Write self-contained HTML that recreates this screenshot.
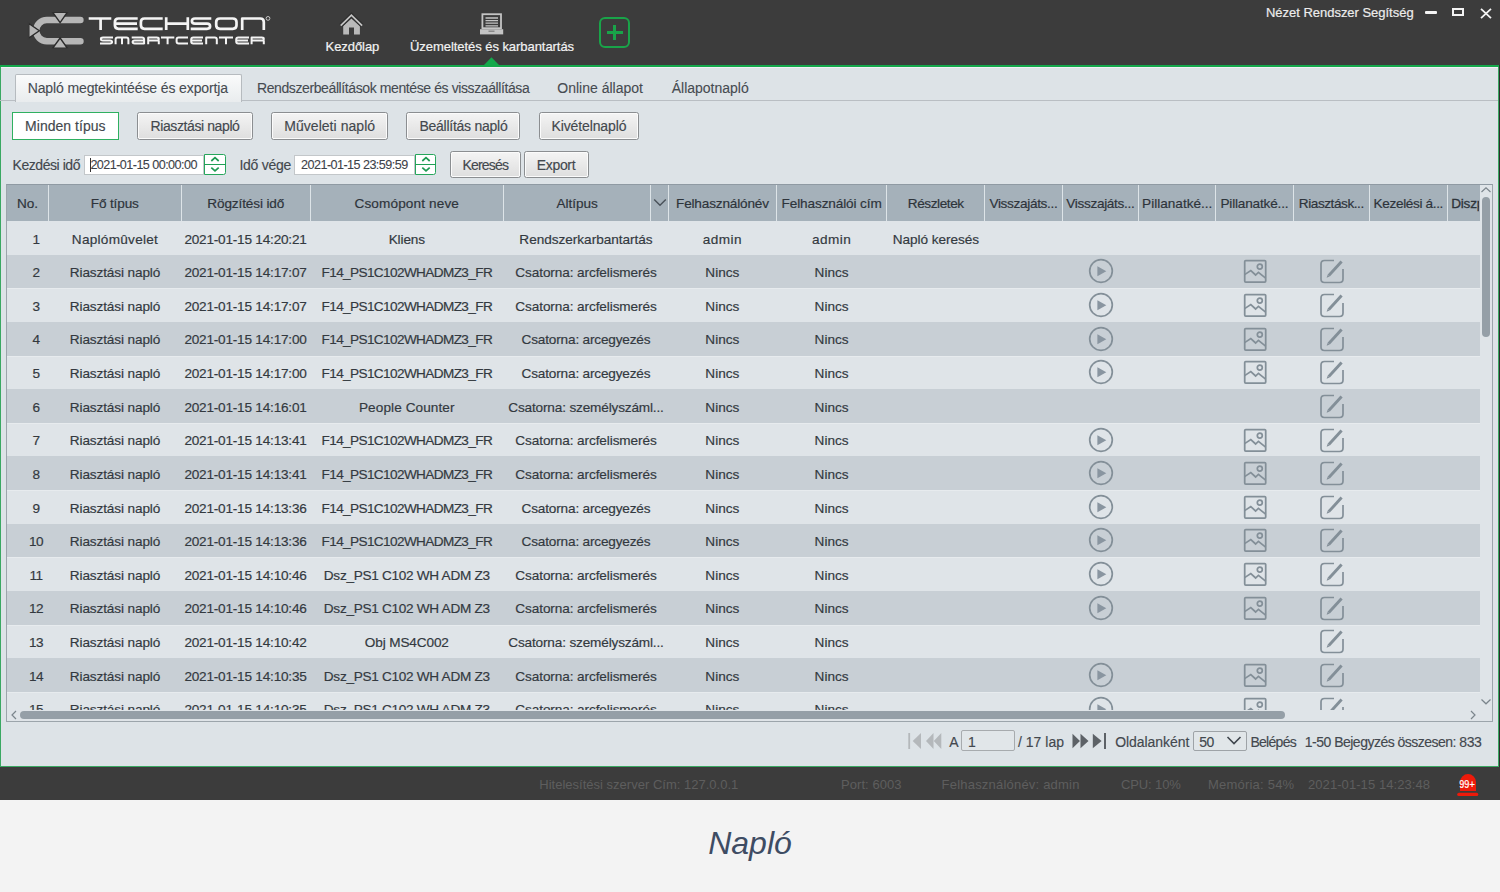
<!DOCTYPE html>
<html><head><meta charset="utf-8">
<style>
*{box-sizing:border-box;margin:0;padding:0}
html,body{width:1500px;height:892px;overflow:hidden;background:#f3f3f3;font-family:"Liberation Sans",sans-serif}
.a{position:absolute}
.t{white-space:pre}
svg{display:block}
</style></head><body>
<div class="a" style="left:0;top:0;width:1500px;height:65px;background:#3c3c3c"></div>
<div class="a" style="left:0;top:65px;width:1500px;height:2px;background:#14a84b"></div>
<div class="a" style="left:0;top:67px;width:1499px;height:700px;background:#dde3e7"></div>
<div class="a" style="left:1px;top:67px;width:1497px;height:1px;background:#f3eff6"></div>
<div class="a" style="left:0;top:67px;width:1px;height:700px;background:#3aa862"></div>
<div class="a" style="left:1498px;top:67px;width:1px;height:700px;background:#3aa862"></div>
<div class="a" style="left:0;top:766px;width:1499px;height:1px;background:#3aa862"></div>
<div class="a" style="left:1499px;top:65px;width:1px;height:702px;background:#2e2e2e"></div>
<div class="a" style="left:0;top:767px;width:1500px;height:33px;background:#3c3c3c"></div>
<div class="a" style="left:0;top:800px;width:1500px;height:92px;background:#f3f3f3"></div>
<div class="a" style="left:1425px;top:11px;width:12px;height:3px;background:#f4f4f4;border-radius:1px"></div>
<div class="a" style="left:1452px;top:8px;width:12px;height:8px;border:2px solid #f4f4f4"></div>
<svg class="a" style="left:1480px;top:8px" width="12" height="11" viewBox="0 0 12 11"><path d="M1 0.8 L11 10.2 M11 0.8 L1 10.2" stroke="#f4f4f4" stroke-width="1.8"/></svg>
<svg class="a" style="left:338px;top:12px" width="28" height="24" viewBox="0 0 28 24"><path d="M5.2 14 L13.4 6.4 L21.9 14 V22.5 H16 V15.6 H11 V22.5 H5.2 Z" fill="#b9b9b9"/><path d="M2.7 13.6 L13.4 3.2 L24.1 13.6" fill="none" stroke="#2e2e2e" stroke-width="4.2"/><path d="M2.7 13.6 L13.4 3.2 L24.1 13.6" fill="none" stroke="#c4c4c4" stroke-width="1.8"/></svg>
<svg class="a" style="left:479px;top:12px" width="26" height="24" viewBox="0 0 26 24"><rect x="3.4" y="2.2" width="18.6" height="14" fill="none" stroke="#c4c4c4" stroke-width="1.8"/><path d="M6.5 6 H19 M6.5 8.6 H19 M6.5 11.2 H19 M6.5 13.8 H19" stroke="#c4c4c4" stroke-width="1.3"/><rect x="1" y="17.2" width="23.2" height="5.2" fill="#c4c4c4"/><rect x="9.5" y="18.6" width="6" height="1.2" fill="#7a7a7a"/></svg>
<svg class="a" style="left:483px;top:57px" width="17" height="9" viewBox="0 0 17 9"><path d="M0.5 8.5 L8.5 0.3 L16.5 8.5 Z" fill="#14a84b"/></svg>
<div class="a" style="left:598.6px;top:17.1px;width:31.3px;height:30.7px;border:2.5px solid #19a449;border-radius:6px"></div>
<div class="a" style="left:606.9px;top:31.3px;width:15.9px;height:2.4px;background:#19a449"></div>
<div class="a" style="left:613.2px;top:25.1px;width:2.7px;height:14.9px;background:#19a449"></div>
<svg class="a" style="left:0;top:0" width="280" height="60" viewBox="0 0 280 60">
<path d="M46.8 16.8 H80.4 A3.25 3.25 0 0 1 80.4 23.3 H46.8 A7.3 7.3 0 0 0 46.8 37.9 H80.4 A3.3 3.3 0 0 1 80.4 44.5 H46.8 A13.85 13.85 0 0 1 46.8 16.8 Z" fill="#b6b6b6"/>
<g fill="#b6b6b6" stroke="#2b2b2b" stroke-width="1.4" stroke-linejoin="miter">
<path d="M52.6 12.2 L67.4 12.2 L60.1 22.6 Z"/>
<path d="M52.6 48.3 L67.4 48.3 L60.1 38.0 Z"/>
<path d="M28.8 23.5 L28.8 38 L39.3 30.8 Z"/>
</g>
<path d="M50 11.4 H70 M50 49.1 H70 M28 21 V40.5" stroke="#3c3c3c" stroke-width="1.6"/>
<g fill="none" stroke="#f4f4f4" stroke-width="2.7" stroke-linejoin="round" stroke-linecap="butt">
<path d="M88.7 18.5 H111.3 M100.6 18.5 V30"/>
<path d="M137.7 18.5 H118.5 Q114.9 18.5 114.9 22 V25.3 Q114.9 28.8 118.5 28.8 H137.7 M115 23.7 H137"/>
<path d="M162.7 18.5 H144.5 Q140.9 18.5 140.9 22 V25.3 Q140.9 28.8 144.5 28.8 H162.7"/>
<path d="M166.2 17.3 V30 M187.8 17.3 V30 M166.2 23.7 H187.8"/>
<path d="M211.3 18.5 H195 Q191.9 18.5 191.9 21.1 Q191.9 23.7 195 23.7 H207 Q210.1 23.7 210.1 26.3 Q210.1 28.8 207 28.8 H190.7"/>
<path d="M220 18.5 H232.7 Q236.5 18.5 236.5 22 V25.3 Q236.5 28.8 232.7 28.8 H220 Q216.2 28.8 216.2 25.3 V22 Q216.2 18.5 220 18.5 Z"/>
<path d="M242.2 30 V18.5 H260.3 Q263.8 18.5 263.8 22 V30"/>
</g>
<circle cx="268" cy="18.4" r="1.9" fill="none" stroke="#d0d0d0" stroke-width="0.9"/>
<g fill="none" stroke="#f4f4f4" stroke-width="2" stroke-linejoin="round" stroke-linecap="butt">
<path d="M113 37.6 H103 Q100.9 37.6 100.9 39 Q100.9 40.5 103 40.5 H110 Q112.1 40.5 112.1 42 Q112.1 43.4 110 43.4 H100"/>
<path d="M115.6 44.3 V39.6 Q115.6 37.6 117.6 37.6 H126.4 Q128.4 37.6 128.4 39.6 V44.3 M122 37.6 V44.3"/>
<path d="M131.7 37.6 H142 Q144.1 37.6 144.1 39.6 V44.3 M144.1 43.4 H134.6 Q132.6 43.4 132.6 42 Q132.6 40.5 134.6 40.5 H144.1"/>
<path d="M148.2 44.3 V37.6 H156.8 Q158.8 37.6 158.8 39 Q158.8 40.5 156.8 40.5 H148.5 M158.8 40.5 V44.3"/>
<path d="M161 37.6 H174.3 M167.6 37.6 V44.3"/>
<path d="M188 37.6 H178.6 Q176.6 37.6 176.6 39.6 V41.4 Q176.6 43.4 178.6 43.4 H188"/>
<path d="M203 37.6 H193.2 Q191.2 37.6 191.2 39.6 V41.4 Q191.2 43.4 193.2 43.4 H203 M191.5 40.5 H202"/>
<path d="M206.2 44.3 V37.6 H214.8 Q216.8 37.6 216.8 39.6 V44.3"/>
<path d="M219 37.6 H233 M226 37.6 V44.3"/>
<path d="M249 37.6 H238.2 Q236.2 37.6 236.2 39.6 V41.4 Q236.2 43.4 238.2 43.4 H249 M236.5 40.5 H248"/>
<path d="M251.6 44.3 V37.6 H261.8 Q263.8 37.6 263.8 39 Q263.8 40.5 261.8 40.5 H252 M263.8 40.5 V44.3"/>
</g></svg>
<div class="a" style="left:0;top:100px;width:1498px;height:1px;background:#b9bec3"></div>
<div class="a" style="left:14.5px;top:73.5px;width:227px;height:28px;border:1px solid #b6bbbf;border-bottom:none;border-radius:2px 2px 0 0;background:linear-gradient(#fafbfb,#e9ecee)"></div>
<div class="a" style="left:12px;top:112px;width:106.7px;height:27.5px;border:1.5px solid #2fb060;background:#fff"></div>
<div class="a" style="left:137.1px;top:112px;width:115.80000000000001px;height:27.69999999999999px;border:1.3px solid #8b8e91;border-radius:2.5px;background:linear-gradient(#f4f4f4,#dedede);box-shadow:inset 0 0 0 1px #fbfbfb"></div>
<div class="a" style="left:271.2px;top:112px;width:117.0px;height:27.69999999999999px;border:1.3px solid #8b8e91;border-radius:2.5px;background:linear-gradient(#f4f4f4,#dedede);box-shadow:inset 0 0 0 1px #fbfbfb"></div>
<div class="a" style="left:406.4px;top:112px;width:114.10000000000002px;height:27.69999999999999px;border:1.3px solid #8b8e91;border-radius:2.5px;background:linear-gradient(#f4f4f4,#dedede);box-shadow:inset 0 0 0 1px #fbfbfb"></div>
<div class="a" style="left:538.7px;top:112px;width:100.39999999999998px;height:27.69999999999999px;border:1.3px solid #8b8e91;border-radius:2.5px;background:linear-gradient(#f4f4f4,#dedede);box-shadow:inset 0 0 0 1px #fbfbfb"></div>
<div class="a" style="left:83.5px;top:154.5px;width:120.69999999999999px;height:20px;border:1px solid #c3c7ca;background:#fff"></div>
<div class="a" style="left:204.2px;top:153.8px;width:21.400000000000006px;height:21px;border:1.4px solid #26a65c;border-radius:0 2.5px 2.5px 0;background:#fff"></div>
<div class="a" style="left:204.2px;top:163.6px;width:21.400000000000006px;height:1.5px;background:#1f9f55"></div>
<svg class="a" style="left:209.89999999999998px;top:156px" width="10" height="17" viewBox="0 0 10 17"><path d="M1.3 5 L5 1.7 L8.7 5 M1.3 11.6 L5 14.9 L8.7 11.6" fill="none" stroke="#1e9a52" stroke-width="1.7"/></svg>
<div class="a" style="left:89.9px;top:157.5px;width:1px;height:14.5px;background:#333"></div>
<div class="a" style="left:294.2px;top:154.5px;width:120.80000000000001px;height:20px;border:1px solid #c3c7ca;background:#fff"></div>
<div class="a" style="left:415px;top:153.8px;width:21.399999999999977px;height:21px;border:1.4px solid #26a65c;border-radius:0 2.5px 2.5px 0;background:#fff"></div>
<div class="a" style="left:415px;top:163.6px;width:21.399999999999977px;height:1.5px;background:#1f9f55"></div>
<svg class="a" style="left:420.7px;top:156px" width="10" height="17" viewBox="0 0 10 17"><path d="M1.3 5 L5 1.7 L8.7 5 M1.3 11.6 L5 14.9 L8.7 11.6" fill="none" stroke="#1e9a52" stroke-width="1.7"/></svg>
<div class="a" style="left:449.9px;top:150.7px;width:70.89999999999998px;height:27.200000000000017px;border:1.3px solid #8b8e91;border-radius:2.5px;background:linear-gradient(#f4f4f4,#dedede);box-shadow:inset 0 0 0 1px #fbfbfb"></div>
<div class="a" style="left:523.5px;top:150.7px;width:65.0px;height:27.200000000000017px;border:1.3px solid #8b8e91;border-radius:2.5px;background:linear-gradient(#f4f4f4,#dedede);box-shadow:inset 0 0 0 1px #fbfbfb"></div>
<div class="a" style="left:6px;top:183.5px;width:1487px;height:538.5px;border:1px solid #9ca5ab;border-top:1.5px solid #8f9aa3;background:#dfe4e8"></div>
<div class="a" style="left:7px;top:185px;width:1472.5px;height:36px;background:#a5b1ba"></div>
<div class="a" style="left:47.5px;top:185px;width:1px;height:36px;background:#dde4e8"></div>
<div class="a" style="left:181.0px;top:185px;width:1px;height:36px;background:#dde4e8"></div>
<div class="a" style="left:309.5px;top:185px;width:1px;height:36px;background:#dde4e8"></div>
<div class="a" style="left:503.0px;top:185px;width:1px;height:36px;background:#dde4e8"></div>
<div class="a" style="left:650.2px;top:185px;width:1px;height:36px;background:#dde4e8"></div>
<div class="a" style="left:667.8px;top:185px;width:1px;height:36px;background:#dde4e8"></div>
<div class="a" style="left:776.0px;top:185px;width:1px;height:36px;background:#dde4e8"></div>
<div class="a" style="left:886.2px;top:185px;width:1px;height:36px;background:#dde4e8"></div>
<div class="a" style="left:984.3px;top:185px;width:1px;height:36px;background:#dde4e8"></div>
<div class="a" style="left:1061.5px;top:185px;width:1px;height:36px;background:#dde4e8"></div>
<div class="a" style="left:1138.2px;top:185px;width:1px;height:36px;background:#dde4e8"></div>
<div class="a" style="left:1215.3px;top:185px;width:1px;height:36px;background:#dde4e8"></div>
<div class="a" style="left:1292.5px;top:185px;width:1px;height:36px;background:#dde4e8"></div>
<div class="a" style="left:1369.1px;top:185px;width:1px;height:36px;background:#dde4e8"></div>
<div class="a" style="left:1446.5px;top:185px;width:1px;height:36px;background:#dde4e8"></div>
<div class="a" style="left:1447.7px;top:185px;width:31.8px;height:36px;overflow:hidden"><div style="position:absolute;left:3.5px;top:10.2px;font-size:13.6px;line-height:17px;color:#2e343b;white-space:nowrap;letter-spacing:-0.2px;-webkit-text-stroke:0.3px currentColor">Diszpécser</div></div>
<svg class="a" style="left:653px;top:197px" width="14" height="11" viewBox="0 0 14 11"><path d="M1.2 2.5 L7 8.3 L12.8 2.5" fill="none" stroke="#4a525a" stroke-width="1.4"/></svg>
<div class="a" style="left:7px;top:709.5px;width:1485px;height:11.5px;background:#dfe4e8"></div>
<div class="a" style="left:20px;top:711px;width:1265px;height:7.6px;border-radius:4px;background:#959fa7"></div>
<svg class="a" style="left:10px;top:710px" width="8" height="10" viewBox="0 0 8 10"><path d="M6 1 L2 5 L6 9" fill="none" stroke="#7b858c" stroke-width="1.2"/></svg>
<svg class="a" style="left:1469px;top:710px" width="8" height="10" viewBox="0 0 8 10"><path d="M2 1 L6 5 L2 9" fill="none" stroke="#7b858c" stroke-width="1.2"/></svg>
<div class="a" style="left:1479.5px;top:185px;width:12.5px;height:524.5px;background:#dfe4e8"></div>
<div class="a" style="left:1481.5px;top:197px;width:8.2px;height:139.5px;border-radius:4px;background:#959fa7"></div>
<svg class="a" style="left:1480px;top:186px" width="12" height="8" viewBox="0 0 12 8"><path d="M1.5 6 L6 1.8 L10.5 6" fill="none" stroke="#7b858c" stroke-width="1.2"/></svg>
<svg class="a" style="left:1480px;top:698px" width="12" height="8" viewBox="0 0 12 8"><path d="M1.5 1.5 L6 5.8 L10.5 1.5" fill="none" stroke="#7b858c" stroke-width="1.2"/></svg>
<svg class="a" style="left:906px;top:732px" width="38" height="18" viewBox="0 0 38 18"><rect x="2.3" y="1" width="1.8" height="16" fill="#b4b8bb"/><path d="M15 1 V17 L6.7 9 Z" fill="#b4b8bb"/><path d="M27.5 1 V17 L20 9 Z M35.3 1 V17 L27.8 9 Z" fill="#b4b8bb"/></svg>
<div class="a" style="left:960.7px;top:730.3px;width:54.6px;height:20.7px;border:1px solid #a7abae;border-radius:2px;background:#e1e6e9"></div>
<svg class="a" style="left:1071px;top:732px" width="38" height="18" viewBox="0 0 38 18"><path d="M1.5 1.8 V16.2 L9 9 Z M9.5 1.8 V16.2 L17.5 9 Z" fill="#5d6267"/><path d="M21.8 1.8 V16.2 L30.6 9 Z" fill="#5d6267"/><rect x="33" y="1" width="2" height="16" fill="#5d6267"/></svg>
<div class="a" style="left:1192.5px;top:730.6px;width:54.7px;height:20.8px;border:1px solid #9ea3a7;border-radius:2px;background:#e1e6e9"></div>
<svg class="a" style="left:1226px;top:735px" width="16" height="11" viewBox="0 0 16 11"><path d="M1.5 2 L8 8.5 L14.5 2" fill="none" stroke="#3f464d" stroke-width="1.6"/></svg>
<svg class="a" style="left:1450px;top:768px" width="36" height="32" viewBox="0 0 36 32"><path d="M10 23 V14 A8 7.9 0 0 1 26 14 V23 Z" fill="#ee1a0a"/><rect x="7.2" y="24.7" width="21.1" height="3.4" rx="1.7" fill="#ee1a0a"/></svg>
<div class="a" style="left:1456.8px;top:777px;width:20px;height:14px;font-size:10.6px;line-height:14px;text-align:center;color:#fff;white-space:nowrap;transform:scaleX(0.86);-webkit-text-stroke:0.2px #fff;font-family:Liberation Sans">99+</div>
<div class="a" style="left:0;top:0;width:1479.5px;height:709.5px;overflow:hidden">
<div class="a" style="left:7px;top:254.63px;width:1472.5px;height:33.63px;background:#c8cfd5"></div>
<div class="a" style="left:7px;top:288.26px;width:1472.5px;height:1.2px;background:#e7ebee"></div>
<div class="a" style="left:7px;top:321.89px;width:1472.5px;height:33.63px;background:#c8cfd5"></div>
<div class="a" style="left:7px;top:355.52px;width:1472.5px;height:1.2px;background:#e7ebee"></div>
<div class="a" style="left:7px;top:389.15px;width:1472.5px;height:33.63px;background:#c8cfd5"></div>
<div class="a" style="left:7px;top:422.78px;width:1472.5px;height:1.2px;background:#e7ebee"></div>
<div class="a" style="left:7px;top:456.41px;width:1472.5px;height:33.63px;background:#c8cfd5"></div>
<div class="a" style="left:7px;top:490.04px;width:1472.5px;height:1.2px;background:#e7ebee"></div>
<div class="a" style="left:7px;top:523.67px;width:1472.5px;height:33.63px;background:#c8cfd5"></div>
<div class="a" style="left:7px;top:557.30px;width:1472.5px;height:1.2px;background:#e7ebee"></div>
<div class="a" style="left:7px;top:590.93px;width:1472.5px;height:33.63px;background:#c8cfd5"></div>
<div class="a" style="left:7px;top:624.56px;width:1472.5px;height:1.2px;background:#e7ebee"></div>
<div class="a" style="left:7px;top:658.19px;width:1472.5px;height:33.63px;background:#c8cfd5"></div>
<div class="a" style="left:7px;top:691.82px;width:1472.5px;height:1.2px;background:#e7ebee"></div>
<svg class="a" style="left:1087.5px;top:258.44px" width="26" height="26" viewBox="0 0 26 26"><circle cx="13" cy="13" r="11.3" fill="none" stroke="#838f98" stroke-width="1.7"/><path d="M9.4 8.3 L18.3 13.3 L9.4 18.3 Z" fill="#8995a0"/></svg>
<svg class="a" style="left:1241.8px;top:258.44px" width="26" height="26" viewBox="0 0 26 26"><rect x="2.7" y="2.5" width="21" height="21.5" rx="1" fill="none" stroke="#838f98" stroke-width="1.75"/><circle cx="17.8" cy="8.6" r="2.5" fill="none" stroke="#838f98" stroke-width="1.7"/><path d="M2.6 16.6 L8.8 12.6 L13.6 17 L16.4 14.4 L23.6 20.2" fill="none" stroke="#838f98" stroke-width="1.7"/></svg>
<svg class="a" style="left:1318.8px;top:258.44px" width="26" height="26" viewBox="0 0 26 26"><path d="M15 2.5 H5.5 Q2 2.5 2 6 V21 Q2 24.5 5.5 24.5 H20.5 Q24 24.5 24 21 V11" fill="none" stroke="#838f98" stroke-width="1.7"/><path d="M22.6 3.6 L9.8 17.6" stroke="#838f98" stroke-width="2.9"/><path d="M7.6 19.8 L8.8 16.6 L10.6 18.4 Z" fill="#838f98"/></svg>
<svg class="a" style="left:1087.5px;top:292.07px" width="26" height="26" viewBox="0 0 26 26"><circle cx="13" cy="13" r="11.3" fill="none" stroke="#838f98" stroke-width="1.7"/><path d="M9.4 8.3 L18.3 13.3 L9.4 18.3 Z" fill="#8995a0"/></svg>
<svg class="a" style="left:1241.8px;top:292.07px" width="26" height="26" viewBox="0 0 26 26"><rect x="2.7" y="2.5" width="21" height="21.5" rx="1" fill="none" stroke="#838f98" stroke-width="1.75"/><circle cx="17.8" cy="8.6" r="2.5" fill="none" stroke="#838f98" stroke-width="1.7"/><path d="M2.6 16.6 L8.8 12.6 L13.6 17 L16.4 14.4 L23.6 20.2" fill="none" stroke="#838f98" stroke-width="1.7"/></svg>
<svg class="a" style="left:1318.8px;top:292.07px" width="26" height="26" viewBox="0 0 26 26"><path d="M15 2.5 H5.5 Q2 2.5 2 6 V21 Q2 24.5 5.5 24.5 H20.5 Q24 24.5 24 21 V11" fill="none" stroke="#838f98" stroke-width="1.7"/><path d="M22.6 3.6 L9.8 17.6" stroke="#838f98" stroke-width="2.9"/><path d="M7.6 19.8 L8.8 16.6 L10.6 18.4 Z" fill="#838f98"/></svg>
<svg class="a" style="left:1087.5px;top:325.70px" width="26" height="26" viewBox="0 0 26 26"><circle cx="13" cy="13" r="11.3" fill="none" stroke="#838f98" stroke-width="1.7"/><path d="M9.4 8.3 L18.3 13.3 L9.4 18.3 Z" fill="#8995a0"/></svg>
<svg class="a" style="left:1241.8px;top:325.70px" width="26" height="26" viewBox="0 0 26 26"><rect x="2.7" y="2.5" width="21" height="21.5" rx="1" fill="none" stroke="#838f98" stroke-width="1.75"/><circle cx="17.8" cy="8.6" r="2.5" fill="none" stroke="#838f98" stroke-width="1.7"/><path d="M2.6 16.6 L8.8 12.6 L13.6 17 L16.4 14.4 L23.6 20.2" fill="none" stroke="#838f98" stroke-width="1.7"/></svg>
<svg class="a" style="left:1318.8px;top:325.70px" width="26" height="26" viewBox="0 0 26 26"><path d="M15 2.5 H5.5 Q2 2.5 2 6 V21 Q2 24.5 5.5 24.5 H20.5 Q24 24.5 24 21 V11" fill="none" stroke="#838f98" stroke-width="1.7"/><path d="M22.6 3.6 L9.8 17.6" stroke="#838f98" stroke-width="2.9"/><path d="M7.6 19.8 L8.8 16.6 L10.6 18.4 Z" fill="#838f98"/></svg>
<svg class="a" style="left:1087.5px;top:359.33px" width="26" height="26" viewBox="0 0 26 26"><circle cx="13" cy="13" r="11.3" fill="none" stroke="#838f98" stroke-width="1.7"/><path d="M9.4 8.3 L18.3 13.3 L9.4 18.3 Z" fill="#8995a0"/></svg>
<svg class="a" style="left:1241.8px;top:359.33px" width="26" height="26" viewBox="0 0 26 26"><rect x="2.7" y="2.5" width="21" height="21.5" rx="1" fill="none" stroke="#838f98" stroke-width="1.75"/><circle cx="17.8" cy="8.6" r="2.5" fill="none" stroke="#838f98" stroke-width="1.7"/><path d="M2.6 16.6 L8.8 12.6 L13.6 17 L16.4 14.4 L23.6 20.2" fill="none" stroke="#838f98" stroke-width="1.7"/></svg>
<svg class="a" style="left:1318.8px;top:359.33px" width="26" height="26" viewBox="0 0 26 26"><path d="M15 2.5 H5.5 Q2 2.5 2 6 V21 Q2 24.5 5.5 24.5 H20.5 Q24 24.5 24 21 V11" fill="none" stroke="#838f98" stroke-width="1.7"/><path d="M22.6 3.6 L9.8 17.6" stroke="#838f98" stroke-width="2.9"/><path d="M7.6 19.8 L8.8 16.6 L10.6 18.4 Z" fill="#838f98"/></svg>
<svg class="a" style="left:1318.8px;top:392.96px" width="26" height="26" viewBox="0 0 26 26"><path d="M15 2.5 H5.5 Q2 2.5 2 6 V21 Q2 24.5 5.5 24.5 H20.5 Q24 24.5 24 21 V11" fill="none" stroke="#838f98" stroke-width="1.7"/><path d="M22.6 3.6 L9.8 17.6" stroke="#838f98" stroke-width="2.9"/><path d="M7.6 19.8 L8.8 16.6 L10.6 18.4 Z" fill="#838f98"/></svg>
<svg class="a" style="left:1087.5px;top:426.60px" width="26" height="26" viewBox="0 0 26 26"><circle cx="13" cy="13" r="11.3" fill="none" stroke="#838f98" stroke-width="1.7"/><path d="M9.4 8.3 L18.3 13.3 L9.4 18.3 Z" fill="#8995a0"/></svg>
<svg class="a" style="left:1241.8px;top:426.60px" width="26" height="26" viewBox="0 0 26 26"><rect x="2.7" y="2.5" width="21" height="21.5" rx="1" fill="none" stroke="#838f98" stroke-width="1.75"/><circle cx="17.8" cy="8.6" r="2.5" fill="none" stroke="#838f98" stroke-width="1.7"/><path d="M2.6 16.6 L8.8 12.6 L13.6 17 L16.4 14.4 L23.6 20.2" fill="none" stroke="#838f98" stroke-width="1.7"/></svg>
<svg class="a" style="left:1318.8px;top:426.60px" width="26" height="26" viewBox="0 0 26 26"><path d="M15 2.5 H5.5 Q2 2.5 2 6 V21 Q2 24.5 5.5 24.5 H20.5 Q24 24.5 24 21 V11" fill="none" stroke="#838f98" stroke-width="1.7"/><path d="M22.6 3.6 L9.8 17.6" stroke="#838f98" stroke-width="2.9"/><path d="M7.6 19.8 L8.8 16.6 L10.6 18.4 Z" fill="#838f98"/></svg>
<svg class="a" style="left:1087.5px;top:460.23px" width="26" height="26" viewBox="0 0 26 26"><circle cx="13" cy="13" r="11.3" fill="none" stroke="#838f98" stroke-width="1.7"/><path d="M9.4 8.3 L18.3 13.3 L9.4 18.3 Z" fill="#8995a0"/></svg>
<svg class="a" style="left:1241.8px;top:460.23px" width="26" height="26" viewBox="0 0 26 26"><rect x="2.7" y="2.5" width="21" height="21.5" rx="1" fill="none" stroke="#838f98" stroke-width="1.75"/><circle cx="17.8" cy="8.6" r="2.5" fill="none" stroke="#838f98" stroke-width="1.7"/><path d="M2.6 16.6 L8.8 12.6 L13.6 17 L16.4 14.4 L23.6 20.2" fill="none" stroke="#838f98" stroke-width="1.7"/></svg>
<svg class="a" style="left:1318.8px;top:460.23px" width="26" height="26" viewBox="0 0 26 26"><path d="M15 2.5 H5.5 Q2 2.5 2 6 V21 Q2 24.5 5.5 24.5 H20.5 Q24 24.5 24 21 V11" fill="none" stroke="#838f98" stroke-width="1.7"/><path d="M22.6 3.6 L9.8 17.6" stroke="#838f98" stroke-width="2.9"/><path d="M7.6 19.8 L8.8 16.6 L10.6 18.4 Z" fill="#838f98"/></svg>
<svg class="a" style="left:1087.5px;top:493.86px" width="26" height="26" viewBox="0 0 26 26"><circle cx="13" cy="13" r="11.3" fill="none" stroke="#838f98" stroke-width="1.7"/><path d="M9.4 8.3 L18.3 13.3 L9.4 18.3 Z" fill="#8995a0"/></svg>
<svg class="a" style="left:1241.8px;top:493.86px" width="26" height="26" viewBox="0 0 26 26"><rect x="2.7" y="2.5" width="21" height="21.5" rx="1" fill="none" stroke="#838f98" stroke-width="1.75"/><circle cx="17.8" cy="8.6" r="2.5" fill="none" stroke="#838f98" stroke-width="1.7"/><path d="M2.6 16.6 L8.8 12.6 L13.6 17 L16.4 14.4 L23.6 20.2" fill="none" stroke="#838f98" stroke-width="1.7"/></svg>
<svg class="a" style="left:1318.8px;top:493.86px" width="26" height="26" viewBox="0 0 26 26"><path d="M15 2.5 H5.5 Q2 2.5 2 6 V21 Q2 24.5 5.5 24.5 H20.5 Q24 24.5 24 21 V11" fill="none" stroke="#838f98" stroke-width="1.7"/><path d="M22.6 3.6 L9.8 17.6" stroke="#838f98" stroke-width="2.9"/><path d="M7.6 19.8 L8.8 16.6 L10.6 18.4 Z" fill="#838f98"/></svg>
<svg class="a" style="left:1087.5px;top:527.49px" width="26" height="26" viewBox="0 0 26 26"><circle cx="13" cy="13" r="11.3" fill="none" stroke="#838f98" stroke-width="1.7"/><path d="M9.4 8.3 L18.3 13.3 L9.4 18.3 Z" fill="#8995a0"/></svg>
<svg class="a" style="left:1241.8px;top:527.49px" width="26" height="26" viewBox="0 0 26 26"><rect x="2.7" y="2.5" width="21" height="21.5" rx="1" fill="none" stroke="#838f98" stroke-width="1.75"/><circle cx="17.8" cy="8.6" r="2.5" fill="none" stroke="#838f98" stroke-width="1.7"/><path d="M2.6 16.6 L8.8 12.6 L13.6 17 L16.4 14.4 L23.6 20.2" fill="none" stroke="#838f98" stroke-width="1.7"/></svg>
<svg class="a" style="left:1318.8px;top:527.49px" width="26" height="26" viewBox="0 0 26 26"><path d="M15 2.5 H5.5 Q2 2.5 2 6 V21 Q2 24.5 5.5 24.5 H20.5 Q24 24.5 24 21 V11" fill="none" stroke="#838f98" stroke-width="1.7"/><path d="M22.6 3.6 L9.8 17.6" stroke="#838f98" stroke-width="2.9"/><path d="M7.6 19.8 L8.8 16.6 L10.6 18.4 Z" fill="#838f98"/></svg>
<svg class="a" style="left:1087.5px;top:561.12px" width="26" height="26" viewBox="0 0 26 26"><circle cx="13" cy="13" r="11.3" fill="none" stroke="#838f98" stroke-width="1.7"/><path d="M9.4 8.3 L18.3 13.3 L9.4 18.3 Z" fill="#8995a0"/></svg>
<svg class="a" style="left:1241.8px;top:561.12px" width="26" height="26" viewBox="0 0 26 26"><rect x="2.7" y="2.5" width="21" height="21.5" rx="1" fill="none" stroke="#838f98" stroke-width="1.75"/><circle cx="17.8" cy="8.6" r="2.5" fill="none" stroke="#838f98" stroke-width="1.7"/><path d="M2.6 16.6 L8.8 12.6 L13.6 17 L16.4 14.4 L23.6 20.2" fill="none" stroke="#838f98" stroke-width="1.7"/></svg>
<svg class="a" style="left:1318.8px;top:561.12px" width="26" height="26" viewBox="0 0 26 26"><path d="M15 2.5 H5.5 Q2 2.5 2 6 V21 Q2 24.5 5.5 24.5 H20.5 Q24 24.5 24 21 V11" fill="none" stroke="#838f98" stroke-width="1.7"/><path d="M22.6 3.6 L9.8 17.6" stroke="#838f98" stroke-width="2.9"/><path d="M7.6 19.8 L8.8 16.6 L10.6 18.4 Z" fill="#838f98"/></svg>
<svg class="a" style="left:1087.5px;top:594.75px" width="26" height="26" viewBox="0 0 26 26"><circle cx="13" cy="13" r="11.3" fill="none" stroke="#838f98" stroke-width="1.7"/><path d="M9.4 8.3 L18.3 13.3 L9.4 18.3 Z" fill="#8995a0"/></svg>
<svg class="a" style="left:1241.8px;top:594.75px" width="26" height="26" viewBox="0 0 26 26"><rect x="2.7" y="2.5" width="21" height="21.5" rx="1" fill="none" stroke="#838f98" stroke-width="1.75"/><circle cx="17.8" cy="8.6" r="2.5" fill="none" stroke="#838f98" stroke-width="1.7"/><path d="M2.6 16.6 L8.8 12.6 L13.6 17 L16.4 14.4 L23.6 20.2" fill="none" stroke="#838f98" stroke-width="1.7"/></svg>
<svg class="a" style="left:1318.8px;top:594.75px" width="26" height="26" viewBox="0 0 26 26"><path d="M15 2.5 H5.5 Q2 2.5 2 6 V21 Q2 24.5 5.5 24.5 H20.5 Q24 24.5 24 21 V11" fill="none" stroke="#838f98" stroke-width="1.7"/><path d="M22.6 3.6 L9.8 17.6" stroke="#838f98" stroke-width="2.9"/><path d="M7.6 19.8 L8.8 16.6 L10.6 18.4 Z" fill="#838f98"/></svg>
<svg class="a" style="left:1318.8px;top:628.38px" width="26" height="26" viewBox="0 0 26 26"><path d="M15 2.5 H5.5 Q2 2.5 2 6 V21 Q2 24.5 5.5 24.5 H20.5 Q24 24.5 24 21 V11" fill="none" stroke="#838f98" stroke-width="1.7"/><path d="M22.6 3.6 L9.8 17.6" stroke="#838f98" stroke-width="2.9"/><path d="M7.6 19.8 L8.8 16.6 L10.6 18.4 Z" fill="#838f98"/></svg>
<svg class="a" style="left:1087.5px;top:662.01px" width="26" height="26" viewBox="0 0 26 26"><circle cx="13" cy="13" r="11.3" fill="none" stroke="#838f98" stroke-width="1.7"/><path d="M9.4 8.3 L18.3 13.3 L9.4 18.3 Z" fill="#8995a0"/></svg>
<svg class="a" style="left:1241.8px;top:662.01px" width="26" height="26" viewBox="0 0 26 26"><rect x="2.7" y="2.5" width="21" height="21.5" rx="1" fill="none" stroke="#838f98" stroke-width="1.75"/><circle cx="17.8" cy="8.6" r="2.5" fill="none" stroke="#838f98" stroke-width="1.7"/><path d="M2.6 16.6 L8.8 12.6 L13.6 17 L16.4 14.4 L23.6 20.2" fill="none" stroke="#838f98" stroke-width="1.7"/></svg>
<svg class="a" style="left:1318.8px;top:662.01px" width="26" height="26" viewBox="0 0 26 26"><path d="M15 2.5 H5.5 Q2 2.5 2 6 V21 Q2 24.5 5.5 24.5 H20.5 Q24 24.5 24 21 V11" fill="none" stroke="#838f98" stroke-width="1.7"/><path d="M22.6 3.6 L9.8 17.6" stroke="#838f98" stroke-width="2.9"/><path d="M7.6 19.8 L8.8 16.6 L10.6 18.4 Z" fill="#838f98"/></svg>
<svg class="a" style="left:1087.5px;top:695.64px" width="26" height="26" viewBox="0 0 26 26"><circle cx="13" cy="13" r="11.3" fill="none" stroke="#838f98" stroke-width="1.7"/><path d="M9.4 8.3 L18.3 13.3 L9.4 18.3 Z" fill="#8995a0"/></svg>
<svg class="a" style="left:1241.8px;top:695.64px" width="26" height="26" viewBox="0 0 26 26"><rect x="2.7" y="2.5" width="21" height="21.5" rx="1" fill="none" stroke="#838f98" stroke-width="1.75"/><circle cx="17.8" cy="8.6" r="2.5" fill="none" stroke="#838f98" stroke-width="1.7"/><path d="M2.6 16.6 L8.8 12.6 L13.6 17 L16.4 14.4 L23.6 20.2" fill="none" stroke="#838f98" stroke-width="1.7"/></svg>
<svg class="a" style="left:1318.8px;top:695.64px" width="26" height="26" viewBox="0 0 26 26"><path d="M15 2.5 H5.5 Q2 2.5 2 6 V21 Q2 24.5 5.5 24.5 H20.5 Q24 24.5 24 21 V11" fill="none" stroke="#838f98" stroke-width="1.7"/><path d="M22.6 3.6 L9.8 17.6" stroke="#838f98" stroke-width="2.9"/><path d="M7.6 19.8 L8.8 16.6 L10.6 18.4 Z" fill="#838f98"/></svg>
<div class="a t" style="left:32.46px;top:230.54px;font-size:13.6px;line-height:17px;color:#33393f;letter-spacing:-0.492px;-webkit-text-stroke:0.18px currentColor">1</div>
<div class="a t" style="left:71.85px;top:230.54px;font-size:13.6px;line-height:17px;color:#33393f;letter-spacing:0.265px;-webkit-text-stroke:0.18px currentColor">Naplómûvelet</div>
<div class="a t" style="left:184.40px;top:230.54px;font-size:13.6px;line-height:17px;color:#33393f;letter-spacing:-0.212px;-webkit-text-stroke:0.18px currentColor">2021-01-15 14:20:21</div>
<div class="a t" style="left:388.65px;top:230.54px;font-size:13.6px;line-height:17px;color:#33393f;letter-spacing:-0.122px;-webkit-text-stroke:0.18px currentColor">Kliens</div>
<div class="a t" style="left:519.35px;top:230.54px;font-size:13.6px;line-height:17px;color:#33393f;letter-spacing:-0.022px;-webkit-text-stroke:0.18px currentColor">Rendszerkarbantartás</div>
<div class="a t" style="left:702.80px;top:230.54px;font-size:13.6px;line-height:17px;color:#33393f;letter-spacing:0.434px;-webkit-text-stroke:0.18px currentColor">admin</div>
<div class="a t" style="left:812.00px;top:230.54px;font-size:13.6px;line-height:17px;color:#33393f;letter-spacing:0.434px;-webkit-text-stroke:0.18px currentColor">admin</div>
<div class="a t" style="left:892.70px;top:230.54px;font-size:13.6px;line-height:17px;color:#33393f;letter-spacing:-0.054px;-webkit-text-stroke:0.18px currentColor">Napló keresés</div>
<div class="a t" style="left:32.46px;top:264.17px;font-size:13.6px;line-height:17px;color:#33393f;letter-spacing:-0.492px;-webkit-text-stroke:0.18px currentColor">2</div>
<div class="a t" style="left:69.80px;top:264.17px;font-size:13.6px;line-height:17px;color:#33393f;letter-spacing:-0.119px;-webkit-text-stroke:0.18px currentColor">Riasztási napló</div>
<div class="a t" style="left:184.40px;top:264.17px;font-size:13.6px;line-height:17px;color:#33393f;letter-spacing:-0.212px;-webkit-text-stroke:0.18px currentColor">2021-01-15 14:17:07</div>
<div class="a t" style="left:321.50px;top:264.17px;font-size:13.6px;line-height:17px;color:#33393f;letter-spacing:-0.618px;-webkit-text-stroke:0.18px currentColor">F14_PS1C102WHADMZ3_FR</div>
<div class="a t" style="left:515.35px;top:264.17px;font-size:13.6px;line-height:17px;color:#33393f;letter-spacing:-0.098px;-webkit-text-stroke:0.18px currentColor">Csatorna: arcfelismerés</div>
<div class="a t" style="left:705.35px;top:264.17px;font-size:13.6px;line-height:17px;color:#33393f;letter-spacing:0.020px;-webkit-text-stroke:0.18px currentColor">Nincs</div>
<div class="a t" style="left:814.55px;top:264.17px;font-size:13.6px;line-height:17px;color:#33393f;letter-spacing:0.020px;-webkit-text-stroke:0.18px currentColor">Nincs</div>
<div class="a t" style="left:32.46px;top:297.80px;font-size:13.6px;line-height:17px;color:#33393f;letter-spacing:-0.492px;-webkit-text-stroke:0.18px currentColor">3</div>
<div class="a t" style="left:69.80px;top:297.80px;font-size:13.6px;line-height:17px;color:#33393f;letter-spacing:-0.119px;-webkit-text-stroke:0.18px currentColor">Riasztási napló</div>
<div class="a t" style="left:184.40px;top:297.80px;font-size:13.6px;line-height:17px;color:#33393f;letter-spacing:-0.212px;-webkit-text-stroke:0.18px currentColor">2021-01-15 14:17:07</div>
<div class="a t" style="left:321.50px;top:297.80px;font-size:13.6px;line-height:17px;color:#33393f;letter-spacing:-0.618px;-webkit-text-stroke:0.18px currentColor">F14_PS1C102WHADMZ3_FR</div>
<div class="a t" style="left:515.35px;top:297.80px;font-size:13.6px;line-height:17px;color:#33393f;letter-spacing:-0.098px;-webkit-text-stroke:0.18px currentColor">Csatorna: arcfelismerés</div>
<div class="a t" style="left:705.35px;top:297.80px;font-size:13.6px;line-height:17px;color:#33393f;letter-spacing:0.020px;-webkit-text-stroke:0.18px currentColor">Nincs</div>
<div class="a t" style="left:814.55px;top:297.80px;font-size:13.6px;line-height:17px;color:#33393f;letter-spacing:0.020px;-webkit-text-stroke:0.18px currentColor">Nincs</div>
<div class="a t" style="left:32.46px;top:331.43px;font-size:13.6px;line-height:17px;color:#33393f;letter-spacing:-0.492px;-webkit-text-stroke:0.18px currentColor">4</div>
<div class="a t" style="left:69.80px;top:331.43px;font-size:13.6px;line-height:17px;color:#33393f;letter-spacing:-0.119px;-webkit-text-stroke:0.18px currentColor">Riasztási napló</div>
<div class="a t" style="left:184.40px;top:331.43px;font-size:13.6px;line-height:17px;color:#33393f;letter-spacing:-0.212px;-webkit-text-stroke:0.18px currentColor">2021-01-15 14:17:00</div>
<div class="a t" style="left:321.50px;top:331.43px;font-size:13.6px;line-height:17px;color:#33393f;letter-spacing:-0.618px;-webkit-text-stroke:0.18px currentColor">F14_PS1C102WHADMZ3_FR</div>
<div class="a t" style="left:521.60px;top:331.43px;font-size:13.6px;line-height:17px;color:#33393f;letter-spacing:-0.172px;-webkit-text-stroke:0.18px currentColor">Csatorna: arcegyezés</div>
<div class="a t" style="left:705.35px;top:331.43px;font-size:13.6px;line-height:17px;color:#33393f;letter-spacing:0.020px;-webkit-text-stroke:0.18px currentColor">Nincs</div>
<div class="a t" style="left:814.55px;top:331.43px;font-size:13.6px;line-height:17px;color:#33393f;letter-spacing:0.020px;-webkit-text-stroke:0.18px currentColor">Nincs</div>
<div class="a t" style="left:32.46px;top:365.06px;font-size:13.6px;line-height:17px;color:#33393f;letter-spacing:-0.492px;-webkit-text-stroke:0.18px currentColor">5</div>
<div class="a t" style="left:69.80px;top:365.06px;font-size:13.6px;line-height:17px;color:#33393f;letter-spacing:-0.119px;-webkit-text-stroke:0.18px currentColor">Riasztási napló</div>
<div class="a t" style="left:184.40px;top:365.06px;font-size:13.6px;line-height:17px;color:#33393f;letter-spacing:-0.212px;-webkit-text-stroke:0.18px currentColor">2021-01-15 14:17:00</div>
<div class="a t" style="left:321.50px;top:365.06px;font-size:13.6px;line-height:17px;color:#33393f;letter-spacing:-0.618px;-webkit-text-stroke:0.18px currentColor">F14_PS1C102WHADMZ3_FR</div>
<div class="a t" style="left:521.60px;top:365.06px;font-size:13.6px;line-height:17px;color:#33393f;letter-spacing:-0.172px;-webkit-text-stroke:0.18px currentColor">Csatorna: arcegyezés</div>
<div class="a t" style="left:705.35px;top:365.06px;font-size:13.6px;line-height:17px;color:#33393f;letter-spacing:0.020px;-webkit-text-stroke:0.18px currentColor">Nincs</div>
<div class="a t" style="left:814.55px;top:365.06px;font-size:13.6px;line-height:17px;color:#33393f;letter-spacing:0.020px;-webkit-text-stroke:0.18px currentColor">Nincs</div>
<div class="a t" style="left:32.46px;top:398.69px;font-size:13.6px;line-height:17px;color:#33393f;letter-spacing:-0.492px;-webkit-text-stroke:0.18px currentColor">6</div>
<div class="a t" style="left:69.80px;top:398.69px;font-size:13.6px;line-height:17px;color:#33393f;letter-spacing:-0.119px;-webkit-text-stroke:0.18px currentColor">Riasztási napló</div>
<div class="a t" style="left:184.40px;top:398.69px;font-size:13.6px;line-height:17px;color:#33393f;letter-spacing:-0.212px;-webkit-text-stroke:0.18px currentColor">2021-01-15 14:16:01</div>
<div class="a t" style="left:358.95px;top:398.69px;font-size:13.6px;line-height:17px;color:#33393f;letter-spacing:0.088px;-webkit-text-stroke:0.18px currentColor">People Counter</div>
<div class="a t" style="left:508.30px;top:398.69px;font-size:13.6px;line-height:17px;color:#33393f;letter-spacing:-0.160px;-webkit-text-stroke:0.18px currentColor">Csatorna: személyszáml...</div>
<div class="a t" style="left:705.35px;top:398.69px;font-size:13.6px;line-height:17px;color:#33393f;letter-spacing:0.020px;-webkit-text-stroke:0.18px currentColor">Nincs</div>
<div class="a t" style="left:814.55px;top:398.69px;font-size:13.6px;line-height:17px;color:#33393f;letter-spacing:0.020px;-webkit-text-stroke:0.18px currentColor">Nincs</div>
<div class="a t" style="left:32.46px;top:432.32px;font-size:13.6px;line-height:17px;color:#33393f;letter-spacing:-0.492px;-webkit-text-stroke:0.18px currentColor">7</div>
<div class="a t" style="left:69.80px;top:432.32px;font-size:13.6px;line-height:17px;color:#33393f;letter-spacing:-0.119px;-webkit-text-stroke:0.18px currentColor">Riasztási napló</div>
<div class="a t" style="left:184.40px;top:432.32px;font-size:13.6px;line-height:17px;color:#33393f;letter-spacing:-0.212px;-webkit-text-stroke:0.18px currentColor">2021-01-15 14:13:41</div>
<div class="a t" style="left:321.50px;top:432.32px;font-size:13.6px;line-height:17px;color:#33393f;letter-spacing:-0.618px;-webkit-text-stroke:0.18px currentColor">F14_PS1C102WHADMZ3_FR</div>
<div class="a t" style="left:515.35px;top:432.32px;font-size:13.6px;line-height:17px;color:#33393f;letter-spacing:-0.098px;-webkit-text-stroke:0.18px currentColor">Csatorna: arcfelismerés</div>
<div class="a t" style="left:705.35px;top:432.32px;font-size:13.6px;line-height:17px;color:#33393f;letter-spacing:0.020px;-webkit-text-stroke:0.18px currentColor">Nincs</div>
<div class="a t" style="left:814.55px;top:432.32px;font-size:13.6px;line-height:17px;color:#33393f;letter-spacing:0.020px;-webkit-text-stroke:0.18px currentColor">Nincs</div>
<div class="a t" style="left:32.46px;top:465.95px;font-size:13.6px;line-height:17px;color:#33393f;letter-spacing:-0.492px;-webkit-text-stroke:0.18px currentColor">8</div>
<div class="a t" style="left:69.80px;top:465.95px;font-size:13.6px;line-height:17px;color:#33393f;letter-spacing:-0.119px;-webkit-text-stroke:0.18px currentColor">Riasztási napló</div>
<div class="a t" style="left:184.40px;top:465.95px;font-size:13.6px;line-height:17px;color:#33393f;letter-spacing:-0.212px;-webkit-text-stroke:0.18px currentColor">2021-01-15 14:13:41</div>
<div class="a t" style="left:321.50px;top:465.95px;font-size:13.6px;line-height:17px;color:#33393f;letter-spacing:-0.618px;-webkit-text-stroke:0.18px currentColor">F14_PS1C102WHADMZ3_FR</div>
<div class="a t" style="left:515.35px;top:465.95px;font-size:13.6px;line-height:17px;color:#33393f;letter-spacing:-0.098px;-webkit-text-stroke:0.18px currentColor">Csatorna: arcfelismerés</div>
<div class="a t" style="left:705.35px;top:465.95px;font-size:13.6px;line-height:17px;color:#33393f;letter-spacing:0.020px;-webkit-text-stroke:0.18px currentColor">Nincs</div>
<div class="a t" style="left:814.55px;top:465.95px;font-size:13.6px;line-height:17px;color:#33393f;letter-spacing:0.020px;-webkit-text-stroke:0.18px currentColor">Nincs</div>
<div class="a t" style="left:32.46px;top:499.58px;font-size:13.6px;line-height:17px;color:#33393f;letter-spacing:-0.492px;-webkit-text-stroke:0.18px currentColor">9</div>
<div class="a t" style="left:69.80px;top:499.58px;font-size:13.6px;line-height:17px;color:#33393f;letter-spacing:-0.119px;-webkit-text-stroke:0.18px currentColor">Riasztási napló</div>
<div class="a t" style="left:184.40px;top:499.58px;font-size:13.6px;line-height:17px;color:#33393f;letter-spacing:-0.212px;-webkit-text-stroke:0.18px currentColor">2021-01-15 14:13:36</div>
<div class="a t" style="left:321.50px;top:499.58px;font-size:13.6px;line-height:17px;color:#33393f;letter-spacing:-0.618px;-webkit-text-stroke:0.18px currentColor">F14_PS1C102WHADMZ3_FR</div>
<div class="a t" style="left:521.60px;top:499.58px;font-size:13.6px;line-height:17px;color:#33393f;letter-spacing:-0.172px;-webkit-text-stroke:0.18px currentColor">Csatorna: arcegyezés</div>
<div class="a t" style="left:705.35px;top:499.58px;font-size:13.6px;line-height:17px;color:#33393f;letter-spacing:0.020px;-webkit-text-stroke:0.18px currentColor">Nincs</div>
<div class="a t" style="left:814.55px;top:499.58px;font-size:13.6px;line-height:17px;color:#33393f;letter-spacing:0.020px;-webkit-text-stroke:0.18px currentColor">Nincs</div>
<div class="a t" style="left:28.93px;top:533.21px;font-size:13.6px;line-height:17px;color:#33393f;letter-spacing:-0.492px;-webkit-text-stroke:0.18px currentColor">10</div>
<div class="a t" style="left:69.80px;top:533.21px;font-size:13.6px;line-height:17px;color:#33393f;letter-spacing:-0.119px;-webkit-text-stroke:0.18px currentColor">Riasztási napló</div>
<div class="a t" style="left:184.40px;top:533.21px;font-size:13.6px;line-height:17px;color:#33393f;letter-spacing:-0.212px;-webkit-text-stroke:0.18px currentColor">2021-01-15 14:13:36</div>
<div class="a t" style="left:321.50px;top:533.21px;font-size:13.6px;line-height:17px;color:#33393f;letter-spacing:-0.618px;-webkit-text-stroke:0.18px currentColor">F14_PS1C102WHADMZ3_FR</div>
<div class="a t" style="left:521.60px;top:533.21px;font-size:13.6px;line-height:17px;color:#33393f;letter-spacing:-0.172px;-webkit-text-stroke:0.18px currentColor">Csatorna: arcegyezés</div>
<div class="a t" style="left:705.35px;top:533.21px;font-size:13.6px;line-height:17px;color:#33393f;letter-spacing:0.020px;-webkit-text-stroke:0.18px currentColor">Nincs</div>
<div class="a t" style="left:814.55px;top:533.21px;font-size:13.6px;line-height:17px;color:#33393f;letter-spacing:0.020px;-webkit-text-stroke:0.18px currentColor">Nincs</div>
<div class="a t" style="left:29.40px;top:566.84px;font-size:13.6px;line-height:17px;color:#33393f;letter-spacing:-0.459px;-webkit-text-stroke:0.18px currentColor">11</div>
<div class="a t" style="left:69.80px;top:566.84px;font-size:13.6px;line-height:17px;color:#33393f;letter-spacing:-0.119px;-webkit-text-stroke:0.18px currentColor">Riasztási napló</div>
<div class="a t" style="left:184.40px;top:566.84px;font-size:13.6px;line-height:17px;color:#33393f;letter-spacing:-0.212px;-webkit-text-stroke:0.18px currentColor">2021-01-15 14:10:46</div>
<div class="a t" style="left:323.85px;top:566.84px;font-size:13.6px;line-height:17px;color:#33393f;letter-spacing:-0.289px;-webkit-text-stroke:0.18px currentColor">Dsz_PS1 C102 WH ADM Z3</div>
<div class="a t" style="left:515.35px;top:566.84px;font-size:13.6px;line-height:17px;color:#33393f;letter-spacing:-0.098px;-webkit-text-stroke:0.18px currentColor">Csatorna: arcfelismerés</div>
<div class="a t" style="left:705.35px;top:566.84px;font-size:13.6px;line-height:17px;color:#33393f;letter-spacing:0.020px;-webkit-text-stroke:0.18px currentColor">Nincs</div>
<div class="a t" style="left:814.55px;top:566.84px;font-size:13.6px;line-height:17px;color:#33393f;letter-spacing:0.020px;-webkit-text-stroke:0.18px currentColor">Nincs</div>
<div class="a t" style="left:28.93px;top:600.47px;font-size:13.6px;line-height:17px;color:#33393f;letter-spacing:-0.492px;-webkit-text-stroke:0.18px currentColor">12</div>
<div class="a t" style="left:69.80px;top:600.47px;font-size:13.6px;line-height:17px;color:#33393f;letter-spacing:-0.119px;-webkit-text-stroke:0.18px currentColor">Riasztási napló</div>
<div class="a t" style="left:184.40px;top:600.47px;font-size:13.6px;line-height:17px;color:#33393f;letter-spacing:-0.212px;-webkit-text-stroke:0.18px currentColor">2021-01-15 14:10:46</div>
<div class="a t" style="left:323.85px;top:600.47px;font-size:13.6px;line-height:17px;color:#33393f;letter-spacing:-0.289px;-webkit-text-stroke:0.18px currentColor">Dsz_PS1 C102 WH ADM Z3</div>
<div class="a t" style="left:515.35px;top:600.47px;font-size:13.6px;line-height:17px;color:#33393f;letter-spacing:-0.098px;-webkit-text-stroke:0.18px currentColor">Csatorna: arcfelismerés</div>
<div class="a t" style="left:705.35px;top:600.47px;font-size:13.6px;line-height:17px;color:#33393f;letter-spacing:0.020px;-webkit-text-stroke:0.18px currentColor">Nincs</div>
<div class="a t" style="left:814.55px;top:600.47px;font-size:13.6px;line-height:17px;color:#33393f;letter-spacing:0.020px;-webkit-text-stroke:0.18px currentColor">Nincs</div>
<div class="a t" style="left:28.93px;top:634.10px;font-size:13.6px;line-height:17px;color:#33393f;letter-spacing:-0.492px;-webkit-text-stroke:0.18px currentColor">13</div>
<div class="a t" style="left:69.80px;top:634.10px;font-size:13.6px;line-height:17px;color:#33393f;letter-spacing:-0.119px;-webkit-text-stroke:0.18px currentColor">Riasztási napló</div>
<div class="a t" style="left:184.40px;top:634.10px;font-size:13.6px;line-height:17px;color:#33393f;letter-spacing:-0.212px;-webkit-text-stroke:0.18px currentColor">2021-01-15 14:10:42</div>
<div class="a t" style="left:364.80px;top:634.10px;font-size:13.6px;line-height:17px;color:#33393f;letter-spacing:-0.126px;-webkit-text-stroke:0.18px currentColor">Obj MS4C002</div>
<div class="a t" style="left:508.30px;top:634.10px;font-size:13.6px;line-height:17px;color:#33393f;letter-spacing:-0.160px;-webkit-text-stroke:0.18px currentColor">Csatorna: személyszáml...</div>
<div class="a t" style="left:705.35px;top:634.10px;font-size:13.6px;line-height:17px;color:#33393f;letter-spacing:0.020px;-webkit-text-stroke:0.18px currentColor">Nincs</div>
<div class="a t" style="left:814.55px;top:634.10px;font-size:13.6px;line-height:17px;color:#33393f;letter-spacing:0.020px;-webkit-text-stroke:0.18px currentColor">Nincs</div>
<div class="a t" style="left:28.93px;top:667.73px;font-size:13.6px;line-height:17px;color:#33393f;letter-spacing:-0.492px;-webkit-text-stroke:0.18px currentColor">14</div>
<div class="a t" style="left:69.80px;top:667.73px;font-size:13.6px;line-height:17px;color:#33393f;letter-spacing:-0.119px;-webkit-text-stroke:0.18px currentColor">Riasztási napló</div>
<div class="a t" style="left:184.40px;top:667.73px;font-size:13.6px;line-height:17px;color:#33393f;letter-spacing:-0.212px;-webkit-text-stroke:0.18px currentColor">2021-01-15 14:10:35</div>
<div class="a t" style="left:323.85px;top:667.73px;font-size:13.6px;line-height:17px;color:#33393f;letter-spacing:-0.289px;-webkit-text-stroke:0.18px currentColor">Dsz_PS1 C102 WH ADM Z3</div>
<div class="a t" style="left:515.35px;top:667.73px;font-size:13.6px;line-height:17px;color:#33393f;letter-spacing:-0.098px;-webkit-text-stroke:0.18px currentColor">Csatorna: arcfelismerés</div>
<div class="a t" style="left:705.35px;top:667.73px;font-size:13.6px;line-height:17px;color:#33393f;letter-spacing:0.020px;-webkit-text-stroke:0.18px currentColor">Nincs</div>
<div class="a t" style="left:814.55px;top:667.73px;font-size:13.6px;line-height:17px;color:#33393f;letter-spacing:0.020px;-webkit-text-stroke:0.18px currentColor">Nincs</div>
<div class="a t" style="left:28.93px;top:701.36px;font-size:13.6px;line-height:17px;color:#33393f;letter-spacing:-0.492px;-webkit-text-stroke:0.18px currentColor">15</div>
<div class="a t" style="left:69.80px;top:701.36px;font-size:13.6px;line-height:17px;color:#33393f;letter-spacing:-0.119px;-webkit-text-stroke:0.18px currentColor">Riasztási napló</div>
<div class="a t" style="left:184.40px;top:701.36px;font-size:13.6px;line-height:17px;color:#33393f;letter-spacing:-0.212px;-webkit-text-stroke:0.18px currentColor">2021-01-15 14:10:35</div>
<div class="a t" style="left:323.85px;top:701.36px;font-size:13.6px;line-height:17px;color:#33393f;letter-spacing:-0.289px;-webkit-text-stroke:0.18px currentColor">Dsz_PS1 C102 WH ADM Z3</div>
<div class="a t" style="left:515.35px;top:701.36px;font-size:13.6px;line-height:17px;color:#33393f;letter-spacing:-0.098px;-webkit-text-stroke:0.18px currentColor">Csatorna: arcfelismerés</div>
<div class="a t" style="left:705.35px;top:701.36px;font-size:13.6px;line-height:17px;color:#33393f;letter-spacing:0.020px;-webkit-text-stroke:0.18px currentColor">Nincs</div>
<div class="a t" style="left:814.55px;top:701.36px;font-size:13.6px;line-height:17px;color:#33393f;letter-spacing:0.020px;-webkit-text-stroke:0.18px currentColor">Nincs</div>
</div>
<div class="a t" style="left:708.20px;top:823.40px;font-size:32px;line-height:40px;color:#3e4c63;letter-spacing:0.000px;font-style:italic">Napló</div>
<div class="a t" style="left:1266.00px;top:4.95px;font-size:13px;line-height:16px;color:#ececec;letter-spacing:-0.024px;-webkit-text-stroke:0.2px currentColor">Nézet Rendszer Segítség</div>
<div class="a t" style="left:325.60px;top:38.95px;font-size:13px;line-height:16px;color:#f2f2f2;letter-spacing:-0.077px;-webkit-text-stroke:0.2px currentColor">Kezdőlap</div>
<div class="a t" style="left:410.00px;top:38.95px;font-size:13px;line-height:16px;color:#f2f2f2;letter-spacing:-0.054px;-webkit-text-stroke:0.2px currentColor">Üzemeltetés és karbantartás</div>
<div class="a t" style="left:27.70px;top:79.10px;font-size:14px;line-height:18px;color:#464b51;letter-spacing:-0.116px;-webkit-text-stroke:0.1px currentColor">Napló megtekintéése és exportja</div>
<div class="a t" style="left:257.00px;top:79.10px;font-size:14px;line-height:18px;color:#464b51;letter-spacing:-0.399px;-webkit-text-stroke:0.1px currentColor">Rendszerbeállítások mentése és visszaállítása</div>
<div class="a t" style="left:557.30px;top:79.10px;font-size:14px;line-height:18px;color:#464b51;letter-spacing:0.005px;-webkit-text-stroke:0.1px currentColor">Online állapot</div>
<div class="a t" style="left:671.70px;top:79.10px;font-size:14px;line-height:18px;color:#464b51;letter-spacing:-0.005px;-webkit-text-stroke:0.1px currentColor">Állapotnapló</div>
<div class="a t" style="left:25.05px;top:117.05px;font-size:14px;line-height:18px;color:#43484e;letter-spacing:0.036px;-webkit-text-stroke:0.15px currentColor">Minden típus</div>
<div class="a t" style="left:150.50px;top:117.15px;font-size:14px;line-height:18px;color:#43484e;letter-spacing:-0.396px;-webkit-text-stroke:0.15px currentColor">Riasztási napló</div>
<div class="a t" style="left:284.20px;top:117.15px;font-size:14px;line-height:18px;color:#43484e;letter-spacing:0.051px;-webkit-text-stroke:0.15px currentColor">Műveleti napló</div>
<div class="a t" style="left:419.45px;top:117.15px;font-size:14px;line-height:18px;color:#43484e;letter-spacing:-0.256px;-webkit-text-stroke:0.15px currentColor">Beállítás napló</div>
<div class="a t" style="left:551.45px;top:117.15px;font-size:14px;line-height:18px;color:#43484e;letter-spacing:-0.115px;-webkit-text-stroke:0.15px currentColor">Kivételnapló</div>
<div class="a t" style="left:12.50px;top:155.60px;font-size:14px;line-height:18px;color:#43484e;letter-spacing:-0.445px;-webkit-text-stroke:0.15px currentColor">Kezdési idő</div>
<div class="a t" style="left:239.50px;top:155.60px;font-size:14px;line-height:18px;color:#43484e;letter-spacing:-0.290px;-webkit-text-stroke:0.15px currentColor">Idő vége</div>
<div class="a t" style="left:90.40px;top:156.89px;font-size:12.6px;line-height:16px;color:#3d4248;letter-spacing:-0.550px;-webkit-text-stroke:0.1px currentColor">2021-01-15 00:00:00</div>
<div class="a t" style="left:301.10px;top:156.89px;font-size:12.6px;line-height:16px;color:#3d4248;letter-spacing:-0.550px;-webkit-text-stroke:0.1px currentColor">2021-01-15 23:59:59</div>
<div class="a t" style="left:462.45px;top:155.60px;font-size:14px;line-height:18px;color:#43484e;letter-spacing:-0.794px;-webkit-text-stroke:0.15px currentColor">Keresés</div>
<div class="a t" style="left:536.65px;top:155.60px;font-size:14px;line-height:18px;color:#43484e;letter-spacing:-0.295px;-webkit-text-stroke:0.15px currentColor">Export</div>
<div class="a t" style="left:16.95px;top:195.24px;font-size:13.6px;line-height:17px;color:#2e343b;letter-spacing:-0.019px;-webkit-text-stroke:0.18px currentColor">No.</div>
<div class="a t" style="left:90.75px;top:195.24px;font-size:13.6px;line-height:17px;color:#2e343b;letter-spacing:-0.141px;-webkit-text-stroke:0.18px currentColor">Fő típus</div>
<div class="a t" style="left:207.35px;top:195.24px;font-size:13.6px;line-height:17px;color:#2e343b;letter-spacing:-0.138px;-webkit-text-stroke:0.18px currentColor">Rögzítési idő</div>
<div class="a t" style="left:354.50px;top:195.24px;font-size:13.6px;line-height:17px;color:#2e343b;letter-spacing:0.123px;-webkit-text-stroke:0.18px currentColor">Csomópont neve</div>
<div class="a t" style="left:556.55px;top:195.24px;font-size:13.6px;line-height:17px;color:#2e343b;letter-spacing:-0.066px;-webkit-text-stroke:0.18px currentColor">Altípus</div>
<div class="a t" style="left:676.00px;top:195.24px;font-size:13.6px;line-height:17px;color:#2e343b;letter-spacing:-0.173px;-webkit-text-stroke:0.18px currentColor">Felhasználónév</div>
<div class="a t" style="left:781.60px;top:195.24px;font-size:13.6px;line-height:17px;color:#2e343b;letter-spacing:-0.125px;-webkit-text-stroke:0.18px currentColor">Felhasználói cím</div>
<div class="a t" style="left:907.75px;top:195.24px;font-size:13.6px;line-height:17px;color:#2e343b;letter-spacing:-0.410px;-webkit-text-stroke:0.18px currentColor">Részletek</div>
<div class="a t" style="left:989.40px;top:195.24px;font-size:13.6px;line-height:17px;color:#2e343b;letter-spacing:-0.329px;-webkit-text-stroke:0.18px currentColor">Visszajáts...</div>
<div class="a t" style="left:1066.35px;top:195.24px;font-size:13.6px;line-height:17px;color:#2e343b;letter-spacing:-0.329px;-webkit-text-stroke:0.18px currentColor">Visszajáts...</div>
<div class="a t" style="left:1142.10px;top:195.24px;font-size:13.6px;line-height:17px;color:#2e343b;letter-spacing:0.001px;-webkit-text-stroke:0.18px currentColor">Pillanatké...</div>
<div class="a t" style="left:1220.40px;top:195.24px;font-size:13.6px;line-height:17px;color:#2e343b;letter-spacing:-0.175px;-webkit-text-stroke:0.18px currentColor">Pillanatké...</div>
<div class="a t" style="left:1298.80px;top:195.24px;font-size:13.6px;line-height:17px;color:#2e343b;letter-spacing:-0.439px;-webkit-text-stroke:0.18px currentColor">Riasztásk...</div>
<div class="a t" style="left:1373.60px;top:195.24px;font-size:13.6px;line-height:17px;color:#2e343b;letter-spacing:-0.359px;-webkit-text-stroke:0.18px currentColor">Kezelési á...</div>
<div class="a t" style="left:949.30px;top:732.90px;font-size:14px;line-height:18px;color:#43484e;letter-spacing:-0.644px;-webkit-text-stroke:0.15px currentColor">A</div>
<div class="a t" style="left:968.00px;top:732.90px;font-size:14px;line-height:18px;color:#43484e;letter-spacing:0.000px;-webkit-text-stroke:0.15px currentColor">1</div>
<div class="a t" style="left:1018.00px;top:732.90px;font-size:14px;line-height:18px;color:#43484e;letter-spacing:0.008px;-webkit-text-stroke:0.15px currentColor">/ 17 lap</div>
<div class="a t" style="left:1115.20px;top:732.90px;font-size:14px;line-height:18px;color:#43484e;letter-spacing:-0.056px;-webkit-text-stroke:0.15px currentColor">Oldalanként</div>
<div class="a t" style="left:1199.20px;top:732.90px;font-size:14px;line-height:18px;color:#43484e;letter-spacing:-0.589px;-webkit-text-stroke:0.15px currentColor">50</div>
<div class="a t" style="left:1250.40px;top:732.90px;font-size:14px;line-height:18px;color:#43484e;letter-spacing:-0.713px;-webkit-text-stroke:0.15px currentColor">Belépés</div>
<div class="a t" style="left:1304.80px;top:732.90px;font-size:14px;line-height:18px;color:#43484e;letter-spacing:-0.510px;-webkit-text-stroke:0.15px currentColor">1-50 Bejegyzés összesen: 833</div>
<div class="a t" style="left:539.30px;top:776.95px;font-size:13px;line-height:16px;color:#5e5e5e;letter-spacing:0.008px;">Hitelesítési szerver Cím: 127.0.0.1</div>
<div class="a t" style="left:841.00px;top:776.95px;font-size:13px;line-height:16px;color:#5e5e5e;letter-spacing:0.060px;">Port: 6003</div>
<div class="a t" style="left:941.60px;top:776.95px;font-size:13px;line-height:16px;color:#5e5e5e;letter-spacing:0.205px;">Felhasználónév: admin</div>
<div class="a t" style="left:1121.00px;top:776.95px;font-size:13px;line-height:16px;color:#5e5e5e;letter-spacing:-0.113px;">CPU: 10%</div>
<div class="a t" style="left:1207.90px;top:776.95px;font-size:13px;line-height:16px;color:#5e5e5e;letter-spacing:0.224px;">Memória: 54%</div>
<div class="a t" style="left:1308.00px;top:776.95px;font-size:13px;line-height:16px;color:#5e5e5e;letter-spacing:0.073px;">2021-01-15 14:23:48</div>
</body></html>
